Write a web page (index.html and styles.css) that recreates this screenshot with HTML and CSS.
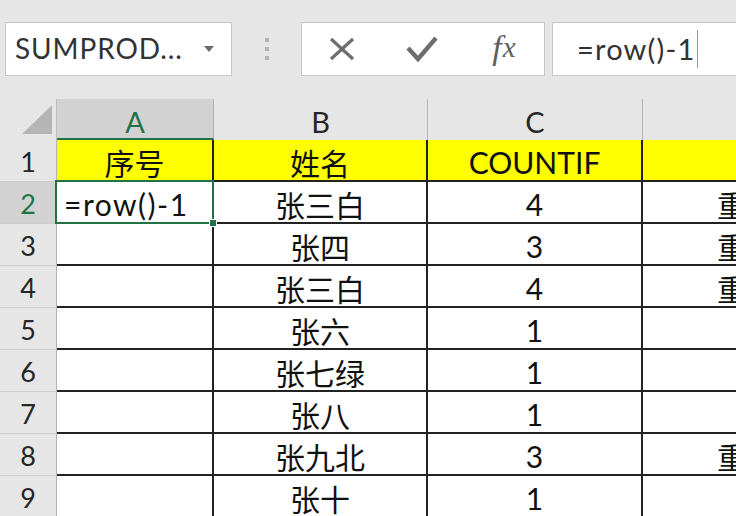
FILE: index.html
```html
<!DOCTYPE html>
<html lang="zh">
<head>
<meta charset="utf-8">
<link rel="stylesheet" href="styles.css">
</head>
<body>
<div class="app">
  <div class="fbar">
    <div class="namebox">
      <span class="nb-text">SUMPROD...</span>
      <svg class="nb-arrow" width="10" height="6" viewBox="0 0 10 6"><path d="M0 0H10L5 6Z" fill="#6b6b6b"/></svg>
    </div>
    <div class="dots"><span></span><span></span><span></span></div>
    <div class="btns">
      <div class="btn">
        <svg width="26" height="24" viewBox="0 0 26 24"><path d="M2 2L24 22M24 2L2 22" stroke="#6e6e6e" stroke-width="3.2" fill="none"/></svg>
      </div>
      <div class="btn">
        <svg width="32" height="26" viewBox="0 0 32 26"><path d="M2 12L12 23L30 2" stroke="#6e6e6e" stroke-width="4.4" fill="none"/></svg>
      </div>
      <div class="btn fx"><span class="f">f</span><span class="x">x</span></div>
    </div>
    <div class="input"><span class="formula">=row()-1</span><span class="caret"></span></div>
  </div>

  <div class="grid">
    <div class="corner"><svg width="30" height="29" viewBox="0 0 30 29"><path d="M30 0V29H0Z" fill="#b5b5b5"/></svg></div>
    <div class="ch sel">A</div>
    <div class="ch">B</div>
    <div class="ch">C</div>
    <div class="ch"></div>

    <div class="rh">1</div>
    <div class="c y"><span>序号</span></div>
    <div class="c y"><span>姓名</span></div>
    <div class="c y"><span>COUNTIF</span></div>
    <div class="c y"></div>

    <div class="rh sel">2</div>
    <div class="c left active"><span class="ftext">=row()-1</span></div>
    <div class="c"><span>张三白</span></div>
    <div class="c"><span>4</span></div>
    <div class="c"><span>重复</span></div>

    <div class="rh">3</div>
    <div class="c"></div>
    <div class="c"><span>张四</span></div>
    <div class="c"><span>3</span></div>
    <div class="c"><span>重复</span></div>

    <div class="rh">4</div>
    <div class="c"></div>
    <div class="c"><span>张三白</span></div>
    <div class="c"><span>4</span></div>
    <div class="c"><span>重复</span></div>

    <div class="rh">5</div>
    <div class="c"></div>
    <div class="c"><span>张六</span></div>
    <div class="c"><span>1</span></div>
    <div class="c"></div>

    <div class="rh">6</div>
    <div class="c"></div>
    <div class="c"><span>张七绿</span></div>
    <div class="c"><span>1</span></div>
    <div class="c"></div>

    <div class="rh">7</div>
    <div class="c"></div>
    <div class="c"><span>张八</span></div>
    <div class="c"><span>1</span></div>
    <div class="c"></div>

    <div class="rh">8</div>
    <div class="c"></div>
    <div class="c"><span>张九北</span></div>
    <div class="c"><span>3</span></div>
    <div class="c"><span>重复</span></div>

    <div class="rh">9</div>
    <div class="c"></div>
    <div class="c"><span>张十</span></div>
    <div class="c"><span>1</span></div>
    <div class="c"></div>
  </div>
</div>
</body>
</html>
```

FILE: styles.css
```css
html, body {
  margin: 0;
  padding: 0;
  background: #e6e6e6;
  overflow: hidden;
}

.app {
  width: 736px;
  height: 516px;
  overflow: hidden;
  font-family: Lato, "Noto Sans CJK SC", sans-serif;
  color: #1a1a1a;
}

/* formula bar */
.fbar {
  display: flex;
  align-items: flex-start;
  height: 99px;
  box-sizing: border-box;
  padding: 22px 0 0 5px;
}

.namebox {
  width: 227px;
  height: 54px;
  box-sizing: border-box;
  background: #fff;
  border: 1px solid #c6c6c6;
  display: flex;
  align-items: center;
  padding: 0 17px 0 9px;
  justify-content: space-between;
}

.nb-text {
  font-size: 28px;
  letter-spacing: 0.9px;
  color: #333;
  padding-bottom: 2px;
}

.dots {
  width: 69px;
  height: 54px;
  display: flex;
  flex-direction: column;
  align-items: center;
  justify-content: center;
  gap: 5px;
}

.dots span {
  width: 4px;
  height: 4px;
  background: #b4b4b4;
}

.btns {
  width: 244px;
  height: 54px;
  box-sizing: border-box;
  background: #fff;
  border: 1px solid #c6c6c6;
  display: flex;
}

.btn {
  flex: 1;
  display: flex;
  align-items: center;
  justify-content: center;
}

.btn.fx {
  font-family: "Liberation Serif", serif;
  font-style: italic;
  color: #5e5e5e;
  padding-bottom: 3px;
  padding-left: 2px;
}

.btn.fx .f {
  font-size: 34px;
}

.btn.fx .x {
  font-size: 29px;
  margin-left: 1px;
}

.input {
  flex: 1;
  margin-left: 7px;
  height: 54px;
  box-sizing: border-box;
  background: #fff;
  border: 1px solid #c6c6c6;
  border-right: none;
  display: flex;
  align-items: center;
  padding-left: 24px;
}

.formula {
  font-size: 29px;
  letter-spacing: 1.2px;
  color: #333;
  padding-bottom: 2px;
}

.caret {
  width: 1px;
  height: 38px;
  background: #9a9a9a;
  margin-left: 2px;
}

/* grid */
.grid {
  display: grid;
  grid-template-columns: 57px 157px 214px 215px 210px;
  grid-template-rows: 41px repeat(9, 42px);
  width: 853px;
}

.corner {
  background: #e6e6e6;
  display: flex;
  align-items: flex-end;
  justify-content: flex-end;
  padding: 0 4px 6px 0;
  border-right: 1px solid #bdbdbd;
}

.ch {
  background: #e6e6e6;
  border-right: 1px solid #b4b4b4;
  display: flex;
  align-items: center;
  justify-content: center;
  font-size: 29px;
  color: #262626;
  padding-top: 3px;
  box-sizing: border-box;
}

.ch.sel {
  background: #d2d2d2;
  color: #217346;
  border-bottom: 2px solid #217346;
  padding-top: 5px;
}

.rh {
  background: #e6e6e6;
  border-right: 1px solid #b4b4b4;
  border-bottom: 1px solid #cfcfcf;
  display: flex;
  align-items: center;
  justify-content: center;
  font-size: 27px;
  color: #262626;
  box-sizing: border-box;
  padding-top: 2px;
}

.rh.sel {
  background: #d2d2d2;
  color: #217346;
}

.c {
  background: #fff;
  border-right: 2px solid #222;
  border-bottom: 2px solid #222;
  box-sizing: border-box;
  display: flex;
  align-items: center;
  justify-content: center;
  font-size: 30px;
  color: #111;
  white-space: nowrap;
  padding-top: 3px;
}

.c.y {
  background: #ffff00;
}

.c.left {
  justify-content: flex-start;
  padding-left: 7px;
}

.ftext {
  letter-spacing: 1.5px;
}

.c.active {
  position: relative;
}

.c.active::after {
  content: "";
  position: absolute;
  left: -2px;
  top: -2px;
  right: -2px;
  bottom: -2px;
  border: 2px solid #217346;
  pointer-events: none;
}

.c.active::before {
  content: "";
  position: absolute;
  right: -5px;
  bottom: -5px;
  width: 6px;
  height: 6px;
  background: #217346;
  border: 1px solid #fff;
  z-index: 2;
}
```
